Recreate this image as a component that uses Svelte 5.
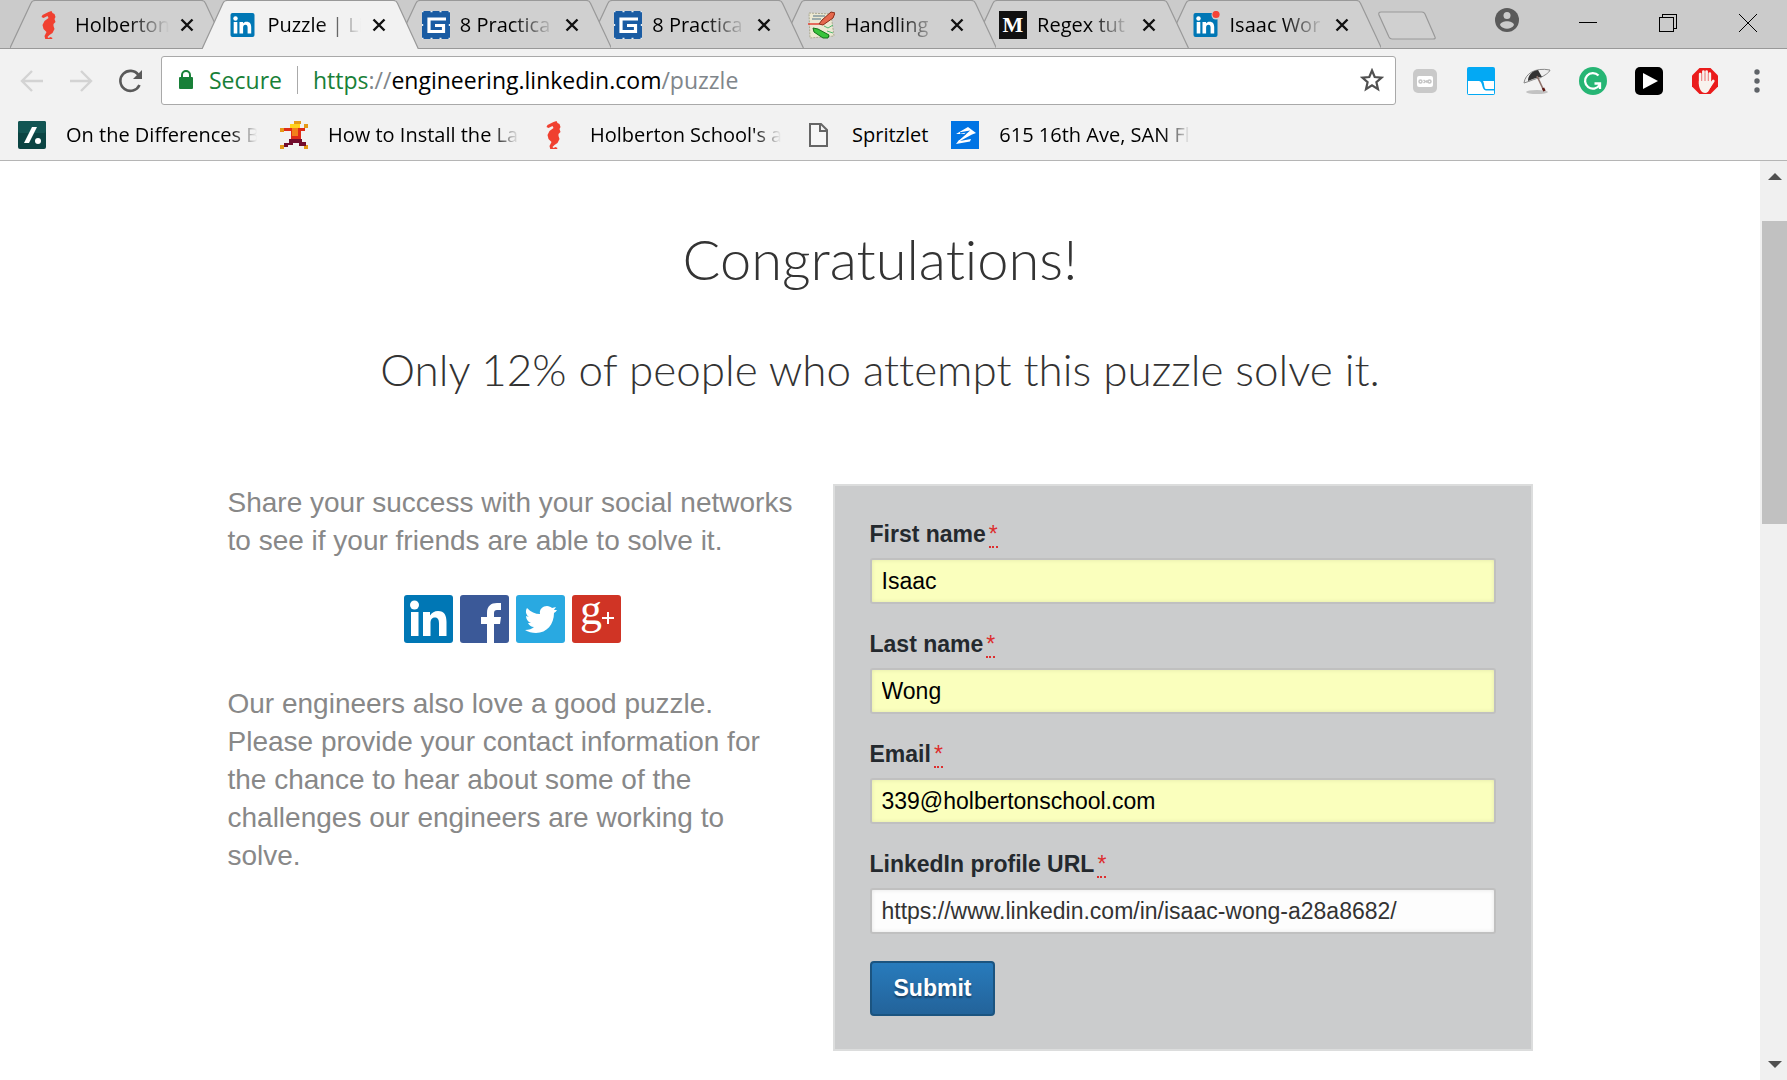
<script>
  const tabs = [
    { icon: 'seahorse', title: 'Holberton' },
    { icon: 'linkedin', title: 'Puzzle | Li', active: true },
    { icon: 'gear', title: '8 Practica' },
    { icon: 'gear', title: '8 Practica' },
    { icon: 'regex', title: 'Handling' },
    { icon: 'medium', title: 'Regex tut' },
    { icon: 'linkedin', title: 'Isaac Wor', badge: true }
  ];

  const bookmarks = [
    { icon: 'slash', title: 'On the Differences B' },
    { icon: 'runner', title: 'How to Install the La' },
    { icon: 'seahorse', title: "Holberton School's a" },
    { icon: 'page', title: 'Spritzlet', short: true },
    { icon: 'zillow', title: '615 16th Ave, SAN Fl' }
  ];

  let fields = $state([
    { id: 'first', label: 'First name', type: 'text', value: 'Isaac', filled: true },
    { id: 'last', label: 'Last name', type: 'text', value: 'Wong', filled: true },
    { id: 'email', label: 'Email', type: 'email', value: '339@holbertonschool.com', filled: true },
    { id: 'profile', label: 'LinkedIn profile URL', type: 'url', value: 'https://www.linkedin.com/in/isaac-wong-a28a8682/', filled: false }
  ]);
</script>

{#snippet favicon(name, badge)}
  <svg class="favicon" viewBox="0 0 28 28" aria-hidden="true">
    {#if name === 'seahorse'}
      <path fill="#f04030" d="M10 1l3-1 1 2 2 1 1 3-1 2 1 3-2 2 0 2 1 3-2 4-3 2-2 2 1 1 2-1 2 1-1 2-3 1-3-1-1-4 2-4-3-3-1-4 2-4 4-3-1-2-4 2-2-1 1-2 4-2z" transform="translate(1.500)" />
    {:else if name === 'linkedin'}
      <rect x="1.500" y="2" width="24" height="24" rx="2" fill="#0077b5" />
      <g fill="#fff">
        <circle cx="6.500" cy="7.500" r="2.200" />
        <rect x="4.700" y="11" width="3.600" height="11.500" />
        <path d="M10.500 11H14v1.600c.8-1.300 2-1.900 3.600-1.900 3.300 0 4.600 2.200 4.600 5.300v6.500h-3.600v-6c0-1.700-.6-2.800-2.100-2.800-1.700 0-2.400 1.200-2.400 2.900v5.900h-3.600z" />
      </g>
      {#if badge}<circle cx="24" cy="4" r="4.500" fill="#d0d0d0" /><circle cx="24" cy="3.500" r="3.600" fill="#f44336" />{/if}
    {:else if name === 'gear'}
      <rect width="28" height="28" fill="#1a5ca3" />
      <path d="M8.500 .5h2M17.500 .5h2M8.500 27.500h2M17.500 27.500h2M.5 13v2M27.500 13v2M0 .5h1.500M26.500 .5H28M0 27.500h1.500M26.500 27.500H28" stroke="#e4edf5" stroke-width="1.400" />
      <path d="M24 8H7v12.500h14.500v-6H13" fill="none" stroke="#fff" stroke-width="3.200" />
    {:else if name === 'regex'}
      <path d="M2 2l22 1 3 22-24 2z" fill="#ece9d2" stroke="#aaa890" stroke-dasharray="2 1" />
      <path d="M6 5h12M5 8h9" stroke="#8298a0" stroke-width="1.500" />
      <path d="M1 13h11" stroke="#e34234" stroke-width="1.500" />
      <path d="M17 15l4 2 5-3M20 20l6 2" fill="none" stroke="#4fb870" />
      <path d="M12 13l3-4 9-8 4 1-2 5-10 7z" fill="#e5684d" stroke="#8b2b16" />
      <path d="M6 17l5 1 11 6-1 3-5 0-9-6z" fill="#38c43c" stroke="#127118" />
    {:else if name === 'medium'}
      <rect width="28" height="28" fill="#111" />
      <text x="14" y="21" text-anchor="middle" class="serif-mark">M</text>
    {:else if name === 'slash'}
      <rect width="28" height="28" rx="2" fill="#0b4443" /><rect width="28" height="12" rx="2" fill="#125553" />
      <path d="M14 6h5L11 22H6z" fill="#fff" /><circle cx="20" cy="20" r="3" fill="#fff" />
    {:else if name === 'runner'}
      <path d="M14 0h7v3h-7zM24 3h4v4h-4zM0 7h4v4H0zM0 24h4v4H0zM24 24h4v4h-4z" fill="#e59a18" />
      <path d="M10 3h10v4H10z" fill="#ffd21c" />
      <path d="M4 7h8v3H4zM18 7h7v3h-7zM11 10h10v8H11z" fill="#df2c18" />
      <path d="M12 7h6v8h-6z" fill="#f2801b" />
      <path d="M9 18h13v3h4v4h-7v-3h-6v2H8v2H4v-4h5z" fill="#720c2d" />
    {:else if name === 'page'}
      <path d="M6 3h11l6 6v16H6zM16 3v7h7" fill="#f7f7f7" stroke="#666" stroke-width="2" />
    {:else if name === 'zillow'}
      <rect width="28" height="28" fill="#0074e4" />
      <path d="M5 13l12-7 8 6-4 1.500L9 20l11-2-1 2.500L5 23l3-4 7-6z" fill="#fff" /><path d="M9 12l8-1.500-9 8" fill="none" stroke="#0074e4" stroke-width="1.300" />
    {/if}
  </svg>
{/snippet}

<div class="browser">
  <header>
    <div class="strip">
      <ul class="tabs">
        {#each tabs as tab, i}
          <li class="tab" class:active={tab.active} style:z-index={tab.active ? 20 : 10 - i}>
            <svg class="shape" viewBox="0 0 216 49" preserveAspectRatio="none" aria-hidden="true">
              <path class="fill" d="M0 49L21 3Q22 0 25 0H191Q194 0 195 3L216 49z" />
              <path class="edge" d="M0 49L21 3Q22 .5 25 .5H191Q194 .5 195 3L216 49" />
            </svg>
            {@render favicon(tab.icon, tab.badge)}
            <span class="title">{tab.title}</span>
            <button class="close" aria-label="Close tab">
              <svg viewBox="0 0 14 14"><path d="M1.500 1.500l11 11M12.500 1.500l-11 11" /></svg>
            </button>
          </li>
        {/each}
      </ul>
      <div class="controls">
        <button class="new" aria-label="New tab">
          <svg viewBox="0 0 60 30"><path d="M4 1H45Q47 1 48 3L58 26Q59 28 56 28H15Q13 28 12 26L2 4Q1 1 4 1z" /></svg>
        </button>
        <button class="user" aria-label="Profile">
          <svg viewBox="0 0 24 24"><circle cx="12" cy="12" r="12" fill="#5a5a5a" /><circle cx="12" cy="7.500" r="3.500" fill="#cbcbcb" /><path d="M5 17c1-5 13-5 14 0-3 5-11 5-14 0z" fill="#cbcbcb" /></svg>
        </button>
        <button class="win" aria-label="Minimize"><svg viewBox="0 0 18 18"><path d="M0 8.500h18" /></svg></button>
        <button class="win" aria-label="Restore"><svg viewBox="0 0 18 18"><path d="M.5 3.500h14v14H.5zM3.500 3.500v-3h14v14h-3" /></svg></button>
        <button class="win" aria-label="Close"><svg viewBox="0 0 18 18"><path d="M0 0l18 18M18 0L0 18" /></svg></button>
      </div>
    </div>

    <div class="toolbar">
      <nav class="history">
        <button aria-label="Back"><svg viewBox="0 0 24 24"><path d="M23 12H2M12 2L2 12l10 10" stroke="#d3d3d3" /></svg></button>
        <button aria-label="Forward"><svg viewBox="0 0 24 24"><path d="M1 12h21M12 2l10 10-10 10" stroke="#d3d3d3" /></svg></button>
        <button aria-label="Reload"><svg viewBox="0 0 24 24"><path d="M20.500 6A10 10 0 1 0 21.500 16" stroke="#5a5a5a" stroke-width="2.600" /><path d="M24 1v9h-9z" fill="#5a5a5a" stroke="none" /></svg></button>
      </nav>
      <div class="omnibox">
        <svg class="lock" viewBox="0 0 14 20" aria-hidden="true"><path d="M3 9V5a4 4 0 0 1 8 0v4" fill="none" stroke="#188038" stroke-width="2" /><rect y="7" width="14" height="12" rx="1" fill="#188038" /></svg>
        <span class="secure">Secure</span>
        <a class="url" href="https://engineering.linkedin.com/puzzle"><span class="green">https</span>://<span class="host">engineering.linkedin.com</span>/puzzle</a>
        <button class="star" aria-label="Bookmark this page"><svg viewBox="0 0 24 24"><path d="M12 2.500l2.700 6.500 7 .6-5.300 4.600 1.600 6.900-6-3.700-6 3.700 1.600-6.900L2.300 9.600l7-.6z" /></svg></button>
      </div>
      <div class="extensions">
        <button aria-label="Password extension">
          <svg viewBox="0 0 28 28"><rect x="2" y="2" width="24" height="24" rx="5" fill="#c9c9c9" /><rect x="6" y="9" width="16" height="11" rx="2" fill="#fff" /><g fill="none" stroke="#c4c4c4" stroke-width="1.500"><circle cx="9.500" cy="14.500" r="1.500" /><circle cx="18.500" cy="14.500" r="1.500" /><path d="M12.500 13l2 1.500-2 1.500M16 13v3" /></g></svg>
        </button>
        <button aria-label="Tab extension">
          <svg viewBox="0 0 28 28"><rect width="28" height="28" rx="2" fill="#03a9f4" /><path d="M1 14h11c4 0 2.500 9.500 7 9.500h8V27H1zM16 14h11v8h-8c-2 0-1.500-6-3-8z" fill="#fff" /></svg>
        </button>
        <button aria-label="Umbrella extension">
          <svg viewBox="0 0 28 28"><ellipse cx="14" cy="25" rx="11" ry="2" fill="#c2c2c2" /><path d="M1 16C2 7 12 0 27 3c-1 3-5 5-10 8-4 0-9 3-16 5z" fill="#eee" stroke="#888" /><path d="M5 14C5 8 9 4 15 3l4 7c-5 0-9 2-14 4z" fill="#333" /><path d="M14 9l7 15" stroke="#8b6f68" stroke-width="1.600" /><path d="M20 21l1.500 3" stroke="#5d1712" stroke-width="2.500" /></svg>
        </button>
        <button aria-label="Grammar extension">
          <svg viewBox="0 0 28 28"><circle cx="14" cy="14" r="14" fill="#26b574" /><path d="M19.500 8.500a7.800 7.800 0 1 0 1 9.500M15.500 16.500h5.500v5.500" fill="none" stroke="#fff" stroke-width="2.300" /></svg>
        </button>
        <button aria-label="Play extension">
          <svg viewBox="0 0 28 28"><rect width="28" height="28" rx="5" /><path d="M8 6l15 8-15 8z" fill="#fff" /></svg>
        </button>
        <button aria-label="Ad blocker">
          <svg viewBox="0 0 28 28"><path d="M8.500 1h11L27 8.500v11L19.500 27h-11L1 19.500v-11z" fill="#ea1c1c" /><g stroke="#f8f3ee" stroke-width="2.700" stroke-linecap="round"><path d="M9.200 7v10M12.400 4.500V17M15.600 4.500V17M18.800 6.500V17M22.300 14l-4 6" /></g><path d="M7.850 14h12.300l1 3-2 4c-1 3-3 5-5 5-4 0-6.300-5-6.300-9z" fill="#f8f3ee" /><path d="M10.800 7v7M14 6v8M17.200 7v7" stroke="#e88" stroke-width=".5" /></svg>
        </button>
        <button class="menu" aria-label="Browser menu">
          <svg viewBox="0 0 6 24"><circle cx="3" cy="3" r="2.700" /><circle cx="3" cy="12" r="2.700" /><circle cx="3" cy="21" r="2.700" /></svg>
        </button>
      </div>
    </div>

    <nav class="bookmarks">
      {#each bookmarks as mark}
        <a href="#bookmark" class:short={mark.short}>{@render favicon(mark.icon)}<span>{mark.title}</span></a>
      {/each}
    </nav>
  </header>

  <div class="viewport">
    <main>
      <h1>Congratulations!</h1>
      <h2>Only 12% of people who attempt this puzzle solve it.</h2>
      <div class="columns">
        <section class="share">
          <p>Share your success with your social networks to see if your friends are able to solve it.</p>
          <div class="social">
            <a href="#linkedin" aria-label="LinkedIn">
              <svg viewBox="0 0 49 48"><rect width="49" height="48" rx="3" fill="#0077b5" /><g fill="#fff"><circle cx="10.500" cy="10" r="4.500" /><rect x="7" y="17" width="7.500" height="24" /><path d="M19 17h7v3.500c2-3 4.500-4.500 8-4.500 6.500 0 8.500 4.500 8.500 11v14H35V28.500c0-3.500-1-6-4-6-3.500 0-4.500 2.500-4.500 6V41H19z" /></g></svg>
            </a>
            <a href="#facebook" aria-label="Facebook">
              <svg viewBox="0 0 49 48"><rect width="49" height="48" rx="3" fill="#3b5998" /><path d="M27 48V29h-6v-7h6v-4c0-7 4-10 10-10h4v7h-4c-2 0-3 1-3 3v4h7l-1 7h-6v19z" fill="#fff" /></svg>
            </a>
            <a href="#twitter" aria-label="Twitter">
              <svg viewBox="0 0 49 48"><rect width="49" height="48" rx="3" fill="#29a9e1" /><path d="M41 15q-1 2-3 3c0 11-7 20-18 20-4 0-8-1-11-3 4 0 7-1 9-3-3 0-5-2-6-4h3c-3-1-5-4-5-7l3 1c-3-2-4-6-2-9 4 4 8 6 13 6-1-5 3-8 7-8 2 0 4 1 5 2l4-1-2 3z" fill="#fff" /></svg>
            </a>
            <a href="#google" aria-label="Google Plus">
              <svg viewBox="0 0 49 48"><rect width="49" height="48" rx="3" fill="#d03425" /><text x="8" y="29" class="plus-mark">g</text><path d="M30 23h12M36 17v12" stroke="#fff" stroke-width="2" /></svg>
            </a>
          </div>
          <p>Our engineers also love a good puzzle. Please provide your contact information for the chance to hear about some of the challenges our engineers are working to solve.</p>
        </section>
        <form onsubmit={(e) => e.preventDefault()}>
          {#each fields as field}
            <div class="field">
              <label for={field.id}>{field.label}<abbr title="required">*</abbr></label>
              <input id={field.id} type={field.type} class:filled={field.filled} bind:value={field.value} spellcheck="false" />
            </div>
          {/each}
          <button class="submit" type="submit">Submit</button>
        </form>
      </div>
    </main>
    <div class="scrollbar" aria-hidden="true">
      <svg viewBox="0 0 14 7"><path d="M0 7l7-7 7 7z" /></svg>
      <div class="track"><div class="thumb"></div></div>
      <svg viewBox="0 0 14 7"><path d="M0 0h14L7 7z" /></svg>
    </div>
  </div>
</div>

<style>
  :global(body) { margin: 0; }
  * { box-sizing: border-box; }
  svg { display: block; }
  button { padding: 0; border: 0; background: none; font: inherit; cursor: pointer; }
  a { color: inherit; text-decoration: none; }

  .browser { display: flex; flex-direction: column; height: 100vh; overflow: hidden; background: #fff; font-family: "Open Sans", "Noto Sans", sans-serif; color: #000; }
  header { background: #f2f2f2; border-bottom: 1px solid #b5b5b5; }
  .favicon { position: relative; flex: none; width: 28px; height: 28px; }
  .serif-mark { font: bold 22px "Liberation Serif", serif; fill: #fff; }

  .strip { display: flex; height: 49px; padding-left: 10px; background: #cbcbcb; box-shadow: inset 0 -1px #999; }
  .tabs { display: flex; flex: 1; min-width: 0; margin: 0; padding: 0; list-style: none; }
  .tab { position: relative; display: flex; align-items: center; flex: 1 1 0; min-width: 0; padding-left: 27px; }
  .shape { position: absolute; top: 0; left: 0; width: calc(100% + 24px); height: 48px; }
  .active .shape { height: 49px; }
  .shape .fill { fill: #d0d0d0; }
  .active .fill { fill: #f2f2f2; }
  .shape .edge { fill: none; stroke: #999; stroke-width: 1.200; }
  .title { position: relative; flex: none; width: 96px; margin-left: 10px; white-space: nowrap; font-size: 20px; line-height: 28px; mask-image: linear-gradient(90deg, #000 55%, transparent 98%); }
  .close { position: relative; margin-left: 9px; }
  .close svg { width: 14px; height: 14px; stroke: #111; stroke-width: 2.400; }

  .controls { display: flex; align-items: flex-start; flex: none; width: 430px; padding: 11px 30px 0 20px; }
  .new svg { width: 60px; height: 30px; fill: #d0d0d0; stroke: #999; stroke-width: 1.200; }
  .user { margin: -3px 0 0 58px; }
  .user svg { width: 24px; height: 24px; }
  .win { margin: 3px 0 0 62px; }
  .user + .win { margin-left: 60px; }
  .win svg { width: 18px; height: 18px; fill: none; stroke: #000; shape-rendering: crispEdges; overflow: visible; }

  .toolbar { display: flex; align-items: center; padding: 7px 27px 0 20px; }
  .history { display: flex; gap: 25px; margin-right: 19px; }
  .history svg { width: 24px; height: 24px; fill: none; stroke-width: 2.400; }
  .omnibox { display: flex; align-items: center; flex: 1; min-width: 0; height: 49px; padding: 0 11px 2px 17px; background: #fff; border: 1px solid #a9a9a9; border-radius: 3px; font-size: 23px; line-height: 32px; }
  .lock { width: 14px; height: 20px; margin-right: 16px; }
  .secure { color: #188038; padding-right: 15px; }
  .url { flex: 1; color: #80868b; padding-left: 15px; white-space: nowrap; line-height: 28px; border-left: 1px solid #aaa; }
  .green { color: #188038; }
  .host { color: #000; }
  .star svg { width: 24px; height: 24px; fill: none; stroke: #505050; stroke-width: 2.200; }
  .extensions { display: flex; align-items: center; gap: 28px; margin-left: 15px; }
  .extensions svg { width: 28px; height: 28px; }
  .extensions .menu { margin-left: 7px; }
  .extensions .menu svg { width: 6px; height: 24px; fill: #5f6368; }

  .bookmarks { display: flex; gap: 19px; padding: 16px 18px 11px; }
  .bookmarks a { display: flex; align-items: center; gap: 20px; }
  .bookmarks span { width: 195px; white-space: nowrap; font-size: 20px; line-height: 28px; mask-image: linear-gradient(90deg, #000 84%, transparent 98%); }
  .bookmarks .short span { width: auto; padding-right: 4px; mask-image: none; }

  .viewport { display: flex; flex: 1; min-height: 0; }
  main { flex: 1; min-width: 0; overflow: hidden; font-family: "Liberation Sans", Arial, sans-serif; }
  h1, h2 { margin: 0; text-align: center; color: #333; font-family: Lato, sans-serif; font-weight: 300; font-variant-ligatures: none; }
  h1 { padding-top: 64px; font-size: 56px; line-height: 68px; }
  h2 { padding-top: 49px; font-size: 44px; line-height: 54px; }
  .columns { display: grid; grid-template-columns: 569fr 700fr; align-items: start; gap: 36px; max-width: 1305px; margin: 88px auto 0; }
  .share { font-size: 28px; line-height: 38px; color: #888; }
  .share p { margin: 0; }
  .social { display: flex; justify-content: center; gap: 7px; margin: 35px 0 42px; }
  .social svg { width: 49px; height: 48px; }
  .plus-mark { font: 44px "Liberation Serif", serif; fill: #fff; }

  form { display: flex; flex-direction: column; align-items: flex-start; gap: 25px; padding: 33px 35px; background: #cbcccd; border: 2px solid #dcdddd; }
  .field { width: 100%; }
  label { display: block; margin-bottom: 9px; font-size: 23px; line-height: 30px; font-weight: bold; color: #24292e; }
  abbr { display: inline-block; margin-left: 3px; line-height: 24px; font-weight: normal; color: #dd2e2e; text-decoration: none; border-bottom: 2px dotted #dd2e2e; }
  input { display: block; width: 100%; height: 46px; padding: 1px 10px 0; border: 2px solid #c0c0c0; border-radius: 3px; background: #fdfdfd; box-shadow: inset 0 0 4px rgb(0 0 0 / 10%); font: 23px "Liberation Sans", Arial, sans-serif; color: #333; }
  input.filled { background: #faffbd; color: #000; }
  .submit { height: 55px; margin-top: 2px; padding: 0 22px; border: 2px solid #1b5480; border-radius: 4px; background: linear-gradient(#287bbc, #23639a); color: #fff; font-size: 23px; font-weight: bold; text-shadow: 0 2px 2px rgb(0 0 0 / 40%); }

  .scrollbar { display: flex; flex-direction: column; align-items: center; width: 27px; padding: 12px 0 12px 2px; background: #f0f0f0; }
  .scrollbar svg { width: 14px; height: 7px; fill: #505050; }
  .track { flex: 1; width: 100%; padding: 41px 0 21px; }
  .thumb { height: 37%; background: #c1c1c1; }
</style>
